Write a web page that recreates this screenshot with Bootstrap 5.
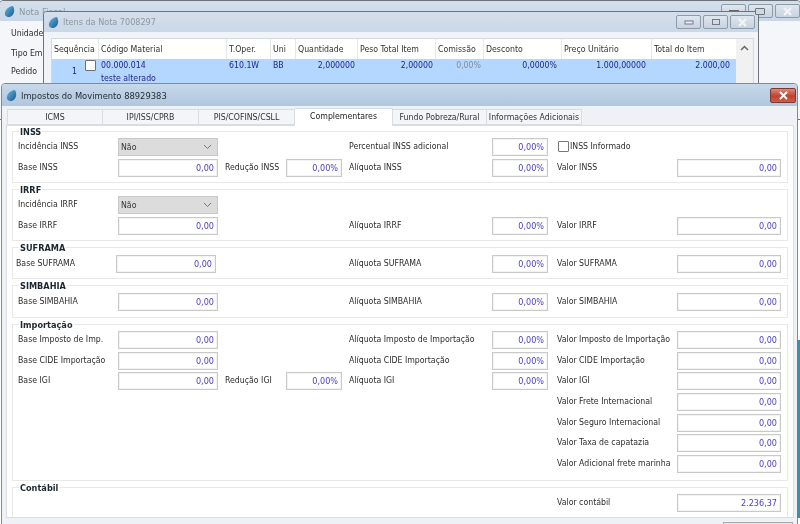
<!DOCTYPE html>
<html lang="pt"><head><meta charset="utf-8"><title>Impostos</title>
<link href="https://cdn.jsdelivr.net/npm/bootstrap@5.3.0/dist/css/bootstrap.min.css" rel="stylesheet">
<style>
html,body{width:800px;height:524px;overflow:hidden;background:#fff}
body{position:relative;font:8.7px/13px "DejaVu Sans Condensed","DejaVu Sans",sans-serif;font-stretch:condensed;color:#2c2c2c}
.desk{filter:blur(.3px);width:800px;height:524px;position:relative;overflow:hidden}
.wnd{position:absolute;background:#f0f4f9;border:1px solid #6d7378;border-radius:4px 4px 0 0;overflow:hidden}
.w1{left:-1px;top:0;width:802px;height:120px;background:#f4f6f9}
.w2{left:43px;top:11px;width:716px;height:110px}
.w3{left:1px;top:83px;width:797px;height:445px;background:#eef1f5;border-color:#7e8c9a}
.tbar{height:20px;background:linear-gradient(#d4dfeb,#c9d8e7);display:flex;align-items:center;padding-left:4px;gap:4px;font-size:9px;color:#8f979f;position:relative}
.w1 .tbar{font-size:9.5px}
.w3 .tbar{height:22px;background:linear-gradient(#c7d8e9,#afc7df);color:#262c33;padding-left:4px;gap:4px;font-size:9.3px}
.drop{width:11px;height:13px;flex:none}
.wbtns{position:absolute;display:flex;gap:2px;top:3px}
.w1 .wbtns{right:0}
.w2 .wbtns{right:3px}
.wbtn{width:25px;height:14px;border:1px solid #8d9aa7;border-radius:2px;background:linear-gradient(#dfe6ee,#c7d3df);display:flex;align-items:center;justify-content:center}
.wbtn svg{display:block}
.closer{width:26px;height:15px;border:1px solid #7c3a30;border-radius:2px;background:linear-gradient(#d98a78,#c0412e 55%,#cd5e48);position:absolute;right:1px;top:4px;display:flex;align-items:center;justify-content:center}
.lbl1{position:absolute;left:11px;white-space:nowrap}
.lu{top:26px}.lt{top:46px}.lp{top:64px}
.ghost{position:absolute;left:755px;top:8px;width:10px;height:7px;border:1px solid #6d7378;border-radius:1px;background:#cfd8e2}
.edge{position:absolute;left:797px;top:340px;width:3px;height:178px;background:#3f8ea8}
.gridbox{position:absolute;left:7px;top:26px;width:703px;height:90px;background:#fff;border:1px solid #d5d8dc}
.gcols{display:grid;grid-template-columns:47px 128px 44px 25px 62px 78px 48px 78px 90px 85px;width:685px}
.ghead{height:20px;background:#fff}
.ghead span{line-height:20px;border-right:1px solid #e6e9ec;color:#333;padding-left:2px;white-space:nowrap}
.ghead span:last-child{border:0}
.grow1{background:#b3d7ff;height:60px;color:#24248a;grid-template-rows:13px 13px;white-space:nowrap}
.grow1>span{padding:0 3px}
.tl{padding-left:2px!important}
.tr{text-align:right}
.pr5{padding-right:5px!important}.pr6{padding-right:6px!important}.pr7{padding-right:7px!important}
.gray{color:#8a8a9a}
.seqc{grid-row:span 2;display:flex;justify-content:flex-end;gap:8px;align-items:flex-start;padding-right:3px}
.seqn{margin-top:6px}
.r2{grid-column:2/span 3}
.scrollup{position:absolute;right:0;top:0;width:17px;height:89px;background:#f1f1f1;text-align:center;padding-top:5px}
.chk{width:11px;height:11px;background:#fff;border:1px solid #6f6f6f;border-radius:1px;display:block;margin-top:1px}
.tabsrow{position:absolute;left:5px;top:24px;display:flex;height:18px;align-items:flex-end;z-index:1}
.tabx{height:16px;margin-bottom:1px;line-height:15px;text-align:center;background:#f3f5f8;border:1px solid #d8dde3;border-left-width:0;color:#333;white-space:nowrap}
.tabx:first-child{border-left-width:1px}
.tabx.on{height:18px;margin-bottom:0;line-height:14px;background:#fff;border-bottom:0;color:#222}
.t96{width:96px}.t98{width:98px}.t94{width:94px}.t95{width:95px}
.panel{position:absolute;left:4px;top:41px;width:788px;height:393px;background:#fff;border:1px solid #d8dde3;padding:5px 5px 0 5px;overflow:hidden}
.grp{border:1px solid #e8e8e8;position:relative;margin-bottom:6px;padding:6px 5px 0}
.h52{height:52px}.h32{height:32px;padding-top:7px}.h33{height:33px;padding-top:7px}.h157{height:157px}.h40{height:40px}
.gtitle{position:absolute;left:6px;top:-5px;background:#fff;padding:0 1px;font-weight:700;font-size:9.1px;line-height:11px;color:#1d2730}
.fr{display:grid;grid-template-columns:100px 100px 7px 61px 56px 7px 143px 56px 9px 120px 104px;height:21px;align-items:start;white-space:nowrap}
.h157 .fr{height:20.7px}
.fr>*{min-width:0}
.fr>span{line-height:17px}
.sf{grid-template-columns:100px 100px 9px 61px 56px 7px 143px 56px 9px 120px 104px;margin-left:-2px}
.inp{height:18px;border:1px solid #c9c9c9;box-shadow:inset 0 0 0 1px #f3f3f3;text-align:right;line-height:17px;padding-right:3px;color:#4a3fc0;background:#fff;font-size:9px}
.sel{height:18px;border:1px solid #c8c8c8;background:#dcdcdc;line-height:16px;padding-left:2px;padding-right:5px;color:#333;display:flex;justify-content:space-between;align-items:center}
.sel svg{display:block}
.ckwrap{display:flex;align-items:center;gap:1px;grid-column:span 2;height:17px}
.ckb{width:11px;height:11px;border:1px solid #777;border-radius:1px;background:#fff;display:block;margin-left:1px}
.c10{grid-column:10}.c7{grid-column:7}
.okbtn{position:absolute;left:721px;top:438px;width:70px;height:12px;background:#e8e8e8;border:1px solid #aaa}
</style></head><body>
<svg width="0" height="0" class="position-absolute"><defs><linearGradient id="dg" x1="0" y1="0" x2="1" y2="1"><stop offset="0" stop-color="#6fb4dc"/><stop offset="1" stop-color="#0d5a94"/></linearGradient><symbol id="dropi" viewBox="0 0 13 15"><path d="M10.500 1C6 1.500 1.500 5 1 9.500 .7 12.500 3 14 5.500 14 9 14 11.500 11 12 7.500 12.300 5 11.500 2.500 10.500 1Z" fill="url(#dg)"/></symbol></defs></svg>
<div class="desk">
 <div class="wnd w1">
  <div class="tbar"><svg class="drop"><use href="#dropi"/></svg><span>Nota Fiscal</span>
   <div class="wbtns"><div class="wbtn"><svg width="12" height="6"><rect x="1" y="2" width="10" height="2" fill="#666"/></svg></div><div class="wbtn"></div><div class="wbtn"><svg width="11" height="9"><path d="M2 1l7 7M9 1L2 8" stroke="#f2f4f7" stroke-width="2.400"/></svg></div></div>
  </div>
  <span class="lbl1 lu">Unidade</span><span class="lbl1 lt">Tipo Emi</span><span class="lbl1 lp">Pedido</span>
 </div>
 <div class="wnd w2">
  <div class="tbar"><svg class="drop"><use href="#dropi"/></svg><span>Itens da Nota 7008297</span>
   <div class="wbtns"><div class="wbtn"><svg width="10" height="6"><rect x="1" y="2" width="8" height="3" fill="#eef" stroke="#778"/></svg></div><div class="wbtn"><svg width="10" height="8"><rect x="1.500" y="1.500" width="7" height="5" fill="none" stroke="#778"/></svg></div><div class="wbtn"><svg width="11" height="9"><path d="M2 1l7 7M9 1L2 8" stroke="#f2f4f7" stroke-width="2.400"/></svg></div></div>
  </div>
  <div class="gridbox">
   <div class="gcols ghead"><span>Sequência</span><span>Código Material</span><span>T.Oper.</span><span>Uni</span><span>Quantidade</span><span>Peso Total Item</span><span>Comissão</span><span>Desconto</span><span>Preço Unitário</span><span>Total do Item</span></div>
   <div class="gcols grow1">
    <div class="seqc"><span class="seqn">1</span><i class="chk"></i></div><span class="tl">00.000.014</span><span class="tl">610.1W</span><span class="tl">BB</span><span class="tr">2,000000</span><span class="tr">2,00000</span><span class="tr gray">0,00%</span><span class="tr pr5">0,0000%</span><span class="tr pr6">1.000,00000</span><span class="tr pr7">2.000,00</span>
    <span class="tl r2">teste alterado</span>
   </div>
   <div class="scrollup"><svg width="9" height="9" viewBox="0 0 9 9" class="d-block mx-auto"><path d="M1 6l3.500-3.500L8 6" fill="none" stroke="#666" stroke-width="1.500"/></svg></div>
  </div>
 </div>
 <i class="ghost"></i>
 <div class="wnd w3">
  <div class="tbar"><svg class="drop"><use href="#dropi"/></svg><span>Impostos do Movimento 88929383</span><div class="closer"><svg width="11" height="9"><path d="M2 1l7 7M9 1L2 8" stroke="#fff" stroke-width="2"/></svg></div></div>
  <div class="tabsrow"><div class="tabx t96">ICMS</div><div class="tabx t96">IPI/ISS/CPRB</div><div class="tabx t96">PIS/COFINS/CSLL</div><div class="tabx on t98">Complementares</div><div class="tabx t94">Fundo Pobreza/Rural</div><div class="tabx t95">Informações Adicionais</div></div>
  <div class="panel">
   <div class="grp h52"><div class="gtitle">INSS</div>
    <div class="fr"><span>Incidência INSS</span><div class="sel"><span>Não</span><svg width="9" height="6"><path d="M1 1l3.500 3.500L8 1" fill="none" stroke="#777"/></svg></div><span class="c7">Percentual INSS adicional</span><div class="inp">0,00%</div><div class="ckwrap c10"><i class="ckb"></i><span>INSS Informado</span></div></div>
    <div class="fr"><span>Base INSS</span><div class="inp">0,00</div><i></i><span>Redução INSS</span><div class="inp">0,00%</div><i></i><span>Alíquota INSS</span><div class="inp">0,00%</div><i></i><span>Valor INSS</span><div class="inp">0,00</div></div>
   </div>
   <div class="grp h52"><div class="gtitle">IRRF</div>
    <div class="fr"><span>Incidência IRRF</span><div class="sel"><span>Não</span><svg width="9" height="6"><path d="M1 1l3.500 3.500L8 1" fill="none" stroke="#777"/></svg></div></div>
    <div class="fr"><span>Base IRRF</span><div class="inp">0,00</div><span class="c7">Alíquota IRRF</span><div class="inp">0,00%</div><i></i><span>Valor IRRF</span><div class="inp">0,00</div></div>
   </div>
   <div class="grp h32"><div class="gtitle">SUFRAMA</div>
    <div class="fr sf"><span>Base SUFRAMA</span><div class="inp">0,00</div><span class="c7">Alíquota SUFRAMA</span><div class="inp">0,00%</div><i></i><span>Valor SUFRAMA</span><div class="inp">0,00</div></div>
   </div>
   <div class="grp h33"><div class="gtitle">SIMBAHIA</div>
    <div class="fr"><span>Base SIMBAHIA</span><div class="inp">0,00</div><span class="c7">Alíquota SIMBAHIA</span><div class="inp">0,00%</div><i></i><span>Valor SIMBAHIA</span><div class="inp">0,00</div></div>
   </div>
   <div class="grp h157"><div class="gtitle">Importação</div>
    <div class="fr"><span>Base Imposto de Imp.</span><div class="inp">0,00</div><span class="c7">Alíquota Imposto de Importação</span><div class="inp">0,00%</div><i></i><span>Valor Imposto de Importação</span><div class="inp">0,00</div></div>
    <div class="fr"><span>Base CIDE Importação</span><div class="inp">0,00</div><span class="c7">Alíquota CIDE Importação</span><div class="inp">0,00%</div><i></i><span>Valor CIDE Importação</span><div class="inp">0,00</div></div>
    <div class="fr"><span>Base IGI</span><div class="inp">0,00</div><i></i><span>Redução IGI</span><div class="inp">0,00%</div><i></i><span>Alíquota IGI</span><div class="inp">0,00%</div><i></i><span>Valor IGI</span><div class="inp">0,00</div></div>
    <div class="fr"><span class="c10">Valor Frete Internacional</span><div class="inp">0,00</div></div>
    <div class="fr"><span class="c10">Valor Seguro Internacional</span><div class="inp">0,00</div></div>
    <div class="fr"><span class="c10">Valor Taxa de capatazia</span><div class="inp">0,00</div></div>
    <div class="fr"><span class="c10">Valor Adicional frete marinha</span><div class="inp">0,00</div></div>
   </div>
   <div class="grp h40"><div class="gtitle">Contábil</div>
    <div class="fr"><span class="c10">Valor contábil</span><div class="inp">2.236,37</div></div>
   </div>
  </div>
  <div class="okbtn"></div>
 </div>
 <i class="edge"></i>
</div>
</body></html>
